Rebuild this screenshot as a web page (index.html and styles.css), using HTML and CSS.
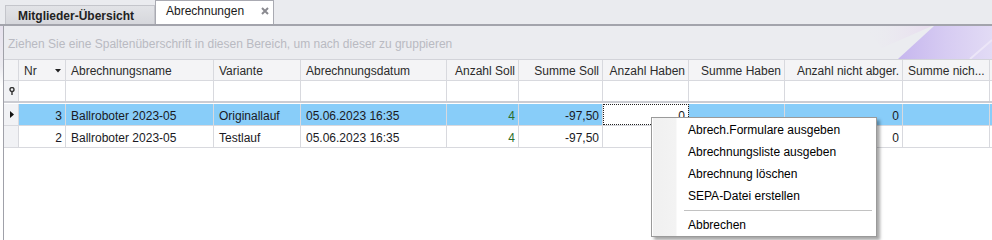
FILE: index.html
```html
<!DOCTYPE html>
<html lang="de">
<head>
<meta charset="utf-8">
<title>Abrechnungen</title>
<link rel="stylesheet" href="styles.css">
</head>
<body>
<div class="tabstrip">
  <div class="tab tab-inactive">Mitglieder-Übersicht</div>
  <div class="tab tab-active">
    <span>Abrechnungen</span>
    <svg class="close" width="8" height="8" viewBox="0 0 8 8"><path d="M1 1L7 7M7 1L1 7" stroke="#8a8a90" stroke-width="2"/></svg>
  </div>
</div>
<div class="main">
  <div class="leftstrip"></div>
  <div class="grid">
    <div class="grouppanel">
      <span>Ziehen Sie eine Spaltenüberschrift in diesen Bereich, um nach dieser zu gruppieren</span>
      <svg class="swoosh" width="140" height="33" viewBox="0 0 140 33">
        <defs>
          <linearGradient id="pg" x1="0" y1="0" x2="1" y2="0">
            <stop offset="0" stop-color="#c6b6ee"/>
            <stop offset="0.5" stop-color="#d6cbf2"/>
            <stop offset="1" stop-color="#e2dbf5"/>
          </linearGradient>
          <linearGradient id="pk" x1="0" y1="0" x2="1" y2="0">
            <stop offset="0" stop-color="#ebecf0" stop-opacity="0"/>
            <stop offset="1" stop-color="#e8dcef"/>
          </linearGradient>
        </defs>
        <polygon points="10,0 80,0 30,22" fill="url(#pk)"/>
        <polygon points="46,33 82,0 140,0 140,33" fill="url(#pg)"/>
        <path d="M118 33 L140 14" stroke="#ece6f8" stroke-width="2"/>
      </svg>
    </div>
    <div class="row header">
      <div class="cell ind"></div>
      <div class="cell">Nr<svg class="sort" width="6" height="4" viewBox="0 0 6 4"><path d="M0 0H6L3 3.5Z" fill="#222"/></svg></div>
      <div class="cell">Abrechnungsname</div>
      <div class="cell">Variante</div>
      <div class="cell">Abrechnungsdatum</div>
      <div class="cell r">Anzahl Soll</div>
      <div class="cell r">Summe Soll</div>
      <div class="cell r">Anzahl Haben</div>
      <div class="cell r">Summe Haben</div>
      <div class="cell r">Anzahl nicht abger.</div>
      <div class="cell">Summe nich...</div>
    </div>
    <div class="row filter">
      <div class="cell ind"><svg width="6" height="8" viewBox="0 0 6 8"><circle cx="3" cy="2.5" r="2" fill="none" stroke="#333" stroke-width="1.4"/><path d="M3 4V8" stroke="#333" stroke-width="1.4"/></svg></div>
      <div class="cell"></div><div class="cell"></div><div class="cell"></div><div class="cell"></div><div class="cell"></div>
      <div class="cell"></div><div class="cell"></div><div class="cell"></div><div class="cell"></div><div class="cell"></div>
    </div>
    <div class="rows">
      <div class="row data selected">
        <div class="cell ind"><svg width="4" height="7" viewBox="0 0 4 7"><path d="M0 0L4 3.5L0 7Z" fill="#111"/></svg></div>
        <div class="cell r">3</div>
        <div class="cell">Ballroboter 2023-05</div>
        <div class="cell">Originallauf</div>
        <div class="cell">05.06.2023 16:35</div>
        <div class="cell r green">4</div>
        <div class="cell r">-97,50</div>
        <div class="cell r focus">0</div>
        <div class="cell r"></div>
        <div class="cell r">0</div>
        <div class="cell"></div>
      </div>
      <div class="row data">
        <div class="cell ind"></div>
        <div class="cell r">2</div>
        <div class="cell">Ballroboter 2023-05</div>
        <div class="cell">Testlauf</div>
        <div class="cell">05.06.2023 16:35</div>
        <div class="cell r green">4</div>
        <div class="cell r">-97,50</div>
        <div class="cell r">0</div>
        <div class="cell r"></div>
        <div class="cell r">0</div>
        <div class="cell"></div>
      </div>
    </div>
  </div>
</div>
<div class="menu">
  <div class="menu-item">Abrech.Formulare ausgeben</div>
  <div class="menu-item">Abrechnungsliste ausgeben</div>
  <div class="menu-item">Abrechnung löschen</div>
  <div class="menu-item">SEPA-Datei erstellen</div>
  <div class="menu-sep"></div>
  <div class="menu-item">Abbrechen</div>
</div>
</body>
</html>
```

FILE: styles.css
```css
* { box-sizing: border-box; }
html, body {
  margin: 0;
  padding: 0;
  width: 992px;
  height: 240px;
  overflow: hidden;
  background: #ffffff;
  font-family: "Liberation Sans", Arial, sans-serif;
  font-size: 12px;
  color: #1a1a24;
}
.tabstrip {
  height: 26px;
  background: #eaebef;
  border-bottom: 2px solid #a3a4ac;
  display: flex;
  align-items: flex-end;
  padding-left: 5px;
}
.tab {
  height: 24px;
  display: flex;
  align-items: center;
}
.tab-inactive {
  height: 19px;
  width: 150px;
  padding-left: 12px;
  padding-top: 2px;
  font-weight: bold;
  color: #222;
  background: linear-gradient(#e2e3e7, #d6d7dc);
  border: 1px solid #c4c5cb;
  border-bottom: none;
  align-self: flex-end;
}
.tab-active {
  width: 119px;
  height: 24px;
  background: #ffffff;
  border: 1px solid #a9aab2;
  border-bottom: none;
  padding-left: 10px;
  padding-bottom: 4px;
  color: #1a1a1a;
  gap: 17px;
}
.close { display: block; margin-top: 1px; }
.main {
  display: flex;
  height: 214px;
}
.leftstrip {
  width: 4px;
  background: linear-gradient(#e7e2ee, #ecebf0 40px, #ffffff 60px);
  border-right: 1px solid #a0a1a9;
}
.grid {
  flex: 1;
  display: flex;
  flex-direction: column;
}
.grouppanel {
  position: relative;
  height: 34px;
  background: #ebecf0;
  border-bottom: 1px solid #d2d3d9;
  padding: 11px 0 0 4px;
  color: #b9bac2;
  overflow: hidden;
}
.swoosh {
  position: absolute;
  right: 0;
  top: 0;
}
.row {
  display: grid;
  grid-template-columns: 15px 47px 148px 87px 146px 72px 84px 86px 96px 118px 87px;
}
.cell {
  border-right: 1px solid #d8d9de;
  padding: 0 5px;
  white-space: nowrap;
  overflow: hidden;
  display: flex;
  align-items: center;
}
.cell.r { justify-content: flex-end; padding-right: 3px; }
.header {
  height: 21px;
  background: #f4f4f6;
  border-bottom: 1px solid #d8d9de;
  color: #2b2b2b;
}
.header .cell { padding-top: 1px; }
.header .cell:nth-child(2) { justify-content: space-between; padding-right: 4px; }
.sort { display: block; }
.ind {
  padding: 0;
  justify-content: center;
  background: #f1f2f5;
}
.header .ind { background: #f4f4f6; }
.filter {
  height: 22px;
  background: #ffffff;
  border-bottom: 2px solid #cbccd2;
}
.filter .ind { padding-left: 1px; }
.rows {
  padding-top: 1px;
}
.data {
  height: 22px;
  border-bottom: 1px solid #d8d9de;
  background: #ffffff;
}
.data .cell { padding-top: 2px; }
.data .ind { padding-left: 1px; padding-top: 0; }
.selected { background: #88cdf9; }
.selected .ind { background: #f1f2f5; }
.green { color: #2b6e2b; }
.focus {
  background: #ffffff;
  outline: 1px dotted #222;
  outline-offset: -1px;
}
.menu {
  position: absolute;
  left: 651px;
  top: 117px;
  width: 226px;
  height: 120px;
  background: linear-gradient(to right, #ffffff 1px, #f0f0f0 1px, #f3f3f3 24px, #ffffff 25px);
  border: 1px solid #9a9a9a;
  box-shadow: 3px 3px 3px rgba(0, 0, 0, 0.35);
  padding: 1px 0;
  color: #000;
}
.menu-item {
  height: 22px;
  line-height: 22px;
  padding-left: 36px;
}
.menu-sep {
  height: 7px;
  margin-left: 32px;
  margin-right: 4px;
  border-top: 3px solid transparent;
  background: linear-gradient(#c2c2c2, #c2c2c2) 0 0 / 100% 1px no-repeat;
}
```
